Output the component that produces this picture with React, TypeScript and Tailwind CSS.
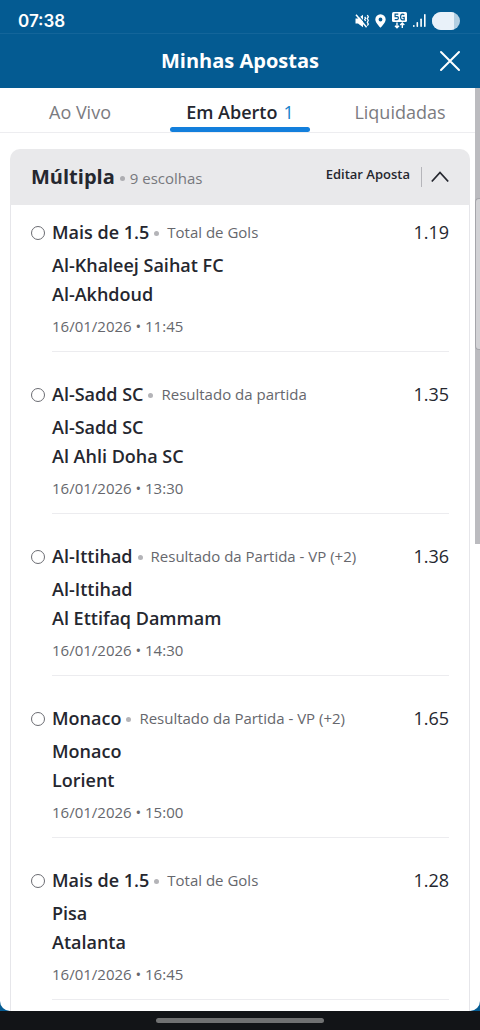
import React, { useState } from "react";

type Pick = {
  selection: string;
  market: string;
  home: string;
  away: string;
  date: string;
  odds: string;
};

const picks: Pick[] = [
  { selection: "Mais de 1.5", market: "Total de Gols", home: "Al-Khaleej Saihat FC", away: "Al-Akhdoud", date: "16/01/2026 • 11:45", odds: "1.19" },
  { selection: "Al-Sadd SC", market: "Resultado da partida", home: "Al-Sadd SC", away: "Al Ahli Doha SC", date: "16/01/2026 • 13:30", odds: "1.35" },
  { selection: "Al-Ittihad", market: "Resultado da Partida - VP (+2)", home: "Al-Ittihad", away: "Al Ettifaq Dammam", date: "16/01/2026 • 14:30", odds: "1.36" },
  { selection: "Monaco", market: "Resultado da Partida - VP (+2)", home: "Monaco", away: "Lorient", date: "16/01/2026 • 15:00", odds: "1.65" },
  { selection: "Mais de 1.5", market: "Total de Gols", home: "Pisa", away: "Atalanta", date: "16/01/2026 • 16:45", odds: "1.28" },
];

function StatusBar() {
  return (
    <div className="flex h-[34px] items-center justify-between border-b border-[#13659a] pt-2 pr-5 pl-[18px] text-white">
      <span className="font-['Inter',sans-serif] text-[17px] leading-6 font-semibold">07:38</span>
      <div className="flex items-center gap-[6px]">
        <svg width="14" height="14" viewBox="0 0 14 14" fill="none" stroke="currentColor" aria-hidden="true">
          <path d="M.5 4.5H3L8 .8v12.400L3 9.500H.5z" fill="currentColor" stroke="none" />
          <path d="M2.300.2l10.400 12" stroke="#045b92" strokeWidth="1.200" />
          <path d="M1 .8l10.600 12.400" strokeWidth="1.500" />
          <path d="M9.700 2.800l.9 1.400-.9 1.400.9 1.400M12.300 1l1 1.800-1 1.800 1 1.900-1 1.800 1 1.800-1 1.500" strokeWidth="1.300" />
        </svg>
        <svg width="11" height="14" viewBox="0 0 11 14" fill="currentColor" aria-hidden="true">
          <path fillRule="evenodd" d="M5.500.3A5.200 5.200 0 0 0 .3 5.500C.3 8.800 5.500 13.700 5.500 13.700s5.200-4.900 5.200-8.200A5.200 5.200 0 0 0 5.500.3zm0 3.300a1.900 1.900 0 1 1 0 3.800 1.900 1.900 0 0 1 0-3.800z" />
        </svg>
        <svg width="15" height="17" viewBox="0 0 15 17" fill="none" stroke="currentColor" aria-hidden="true">
          <rect x="0" y="0" width="15" height="10" rx="1.500" fill="currentColor" stroke="none" />
          <path d="M6.300 2.200H3.100V4.600H5.200Q6.400 4.700 6.400 6.100T5.100 7.700H2.700M12.300 2.800Q11.600 2.200 10.500 2.200 8.600 2.200 8.600 5T10.500 7.800H12.200V5.300H10.500" stroke="#045b92" strokeWidth="1.200" />
          <path d="M5 10.500v5M3 13.700l2 2.100 2-2.100M10.300 16v-5M8.300 13l2-2.100 2 2.100" strokeWidth="1.400" />
        </svg>
        <svg width="13" height="13" viewBox="0 0 13 13" fill="currentColor" aria-hidden="true">
          <rect x="0" y="11" width="1.600" height="2" rx=".7" />
          <rect x="3.500" y="8" width="1.600" height="5" rx=".7" />
          <rect x="7.300" y="4.500" width="1.600" height="8.500" rx=".7" />
          <rect x="11" y="0" width="1.600" height="13" rx=".7" />
        </svg>
        <span className="flex h-[18px] w-7 overflow-hidden rounded-full bg-[#b4cfe2]" role="img" aria-label="Bateria">
          <span className="h-full w-[22px] bg-[#e9f1f9]" />
        </span>
      </div>
    </div>
  );
}

function PickItem({ pick }: { pick: Pick }) {
  return (
    <li className="flex gap-[7px] pt-[13px]">
      <span className="mt-2 size-[14px] shrink-0 rounded-full border border-[#6b6c72]" />
      <div className="min-w-0 grow border-b border-[#ececef] pb-[13px]">
        <div className="flex items-center justify-between leading-7">
          <p className="flex items-center">
            <strong className="text-lg leading-7 font-[650]">{pick.selection}</strong>
            <span className="mt-[2px] mr-2 ml-[5px] size-[5px] rounded-full bg-[#b4b4b8]" />
            <span className="text-[15px] text-[#66676d]">{pick.market}</span>
          </p>
          <span className="text-lg leading-7">{pick.odds}</span>
        </div>
        <p className="mt-[5px] text-lg leading-[29px] font-[650]">{pick.home}</p>
        <p className="text-lg leading-[29px] font-[650]">{pick.away}</p>
        <p className="mt-[5px] text-[15px] leading-6 text-[#66676d]">{pick.date}</p>
      </div>
    </li>
  );
}

export default function App() {
  const [tab, setTab] = useState(1);
  const [open, setOpen] = useState(true);
  const tabs = ["Ao Vivo", "Em Aberto", "Liquidadas"];

  return (
    <div className="min-h-screen bg-[#121417] font-['Open_Sans',sans-serif] text-[#25272f]">
      <div className="bg-[#045b92]">
        <StatusBar />
        <header className="grid h-[54px] grid-cols-[1fr_auto_1fr] items-center px-[19px] text-white">
          <h1 className="col-start-2 text-xl leading-7 font-bold">Minhas Apostas</h1>
          <button type="button" aria-label="Fechar" className="justify-self-end">
            <svg width="22" height="22" viewBox="0 0 22 22" fill="none" stroke="currentColor" strokeWidth="2" strokeLinecap="round" aria-hidden="true">
              <path d="M2 2l18 18M20 2L2 20" />
            </svg>
          </button>
        </header>

        <main className="relative rounded-b-[10px] bg-white">
          <nav className="grid h-[45px] grid-cols-3 border-b border-[#ededf0]">
            {tabs.map((label, i) => (
              <button key={label} type="button" onClick={() => setTab(i)} className="flex flex-col px-[10px] pt-[10px]">
                <span
                  className={
                    i === tab
                      ? "flex w-full justify-center gap-[6px] text-lg leading-7 font-[650]"
                      : "flex w-full justify-center gap-[6px] text-lg leading-7 text-[#7b7b7f]"
                  }
                >
                  {label}
                  {i === 1 && <span className="font-normal text-[#137fc8]">1</span>}
                </span>
                {i === tab && <span className="mt-px h-[5px] w-full rounded-full bg-[#137fdc]" />}
              </button>
            ))}
          </nav>

          <section className="mx-[10px] mt-4">
            <header className="flex h-14 items-center justify-between rounded-t-[10px] bg-[#e9e9eb] pr-[21px] pl-[21px]">
              <h2 className="flex items-center">
                <span className="text-xl leading-7 font-bold">Múltipla</span>
                <span className="mt-[2px] mr-[5px] ml-[5px] size-[5px] rounded-full bg-[#adadb1]" />
                <span className="pt-[2px] text-[15px] text-[#77787d]">9 escolhas</span>
              </h2>
              <div className="flex items-center">
                <button type="button" className="pb-1 text-[13px] font-[650]">Editar Aposta</button>
                <span className="mr-[9px] ml-[11px] h-5 w-px bg-[#b5b5ba]" />
                <button type="button" aria-label="Recolher" aria-expanded={open} onClick={() => setOpen(!open)}>
                  <svg width="18" height="12" viewBox="0 0 18 12" fill="none" stroke="currentColor" strokeWidth="1.8" aria-hidden="true">
                    <path d="M.8 10.500L9 1.500l8.200 9" />
                  </svg>
                </button>
              </div>
            </header>
            {open && (
              <ul className="flex flex-col gap-[15px] border-x border-[#e6e6ea] pr-5 pb-[11px] pl-5">
                {picks.map((p) => (
                  <PickItem key={p.date} pick={p} />
                ))}
              </ul>
            )}
          </section>

          <span className="absolute top-0 right-0 h-[456px] w-[5px] bg-[#bbbbbf]" />
          <span className="absolute top-[110px] right-0 h-[152px] w-[5px] rounded-l-[4px] border border-r-0 border-[#a5a5aa] bg-[#d2d2d5]" />
        </main>
      </div>
      <footer className="flex h-[19px] items-center justify-center">
        <span className="h-[5px] w-[35%] rounded-full bg-[#707172]" />
      </footer>
    </div>
  );
}
